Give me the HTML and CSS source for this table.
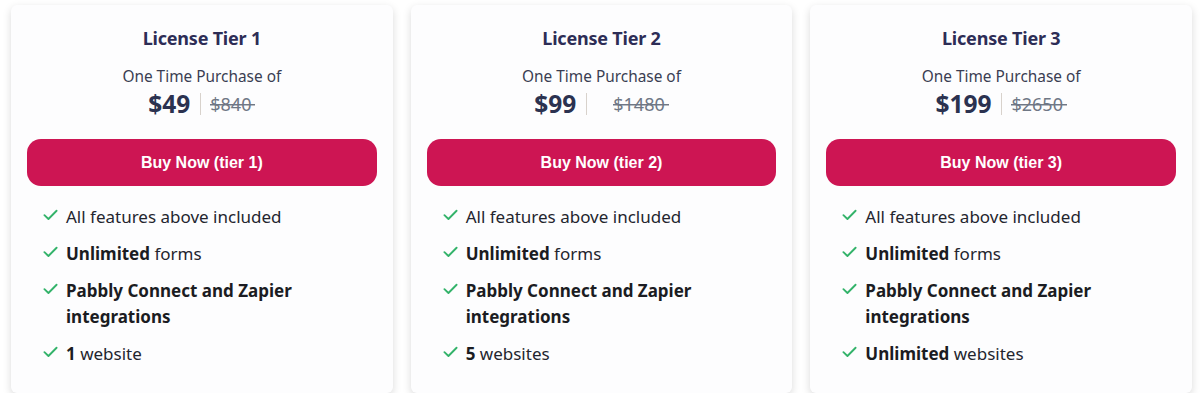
FILE: index.html
```html
<!DOCTYPE html>
<html>
<head>
<meta charset="utf-8">
<link rel="stylesheet" href="styles.css">
</head>
<body>
<div class="tiers">
  <div class="card">
    <h2 class="title">License Tier 1</h2>
    <p class="sub">One Time Purchase of</p>
    <div class="price-row">
      <span class="price">$49</span>
      <span class="sep"></span>
      <span class="old">$840</span>
    </div>
    <a class="buy">Buy Now (tier 1)</a>
    <ul class="features">
      <li><svg class="chk" viewBox="0 0 16 12"><path d="M1.5 6.2 L5.8 10.3 L14.5 1.5"/></svg><span>All features above included</span></li>
      <li><svg class="chk" viewBox="0 0 16 12"><path d="M1.5 6.2 L5.8 10.3 L14.5 1.5"/></svg><span><b>Unlimited</b> forms</span></li>
      <li><svg class="chk" viewBox="0 0 16 12"><path d="M1.5 6.2 L5.8 10.3 L14.5 1.5"/></svg><span><b>Pabbly Connect and Zapier integrations</b></span></li>
      <li><svg class="chk" viewBox="0 0 16 12"><path d="M1.5 6.2 L5.8 10.3 L14.5 1.5"/></svg><span><b>1</b> website</span></li>
    </ul>
  </div>
  <div class="card">
    <h2 class="title">License Tier 2</h2>
    <p class="sub">One Time Purchase of</p>
    <div class="price-row">
      <span class="price">$99</span>
      <span class="sep"></span>
      <span class="old wide">$1480</span>
    </div>
    <a class="buy">Buy Now (tier 2)</a>
    <ul class="features">
      <li><svg class="chk" viewBox="0 0 16 12"><path d="M1.5 6.2 L5.8 10.3 L14.5 1.5"/></svg><span>All features above included</span></li>
      <li><svg class="chk" viewBox="0 0 16 12"><path d="M1.5 6.2 L5.8 10.3 L14.5 1.5"/></svg><span><b>Unlimited</b> forms</span></li>
      <li><svg class="chk" viewBox="0 0 16 12"><path d="M1.5 6.2 L5.8 10.3 L14.5 1.5"/></svg><span><b>Pabbly Connect and Zapier integrations</b></span></li>
      <li><svg class="chk" viewBox="0 0 16 12"><path d="M1.5 6.2 L5.8 10.3 L14.5 1.5"/></svg><span><b>5</b> websites</span></li>
    </ul>
  </div>
  <div class="card">
    <h2 class="title">License Tier 3</h2>
    <p class="sub">One Time Purchase of</p>
    <div class="price-row">
      <span class="price">$199</span>
      <span class="sep"></span>
      <span class="old">$2650</span>
    </div>
    <a class="buy">Buy Now (tier 3)</a>
    <ul class="features">
      <li><svg class="chk" viewBox="0 0 16 12"><path d="M1.5 6.2 L5.8 10.3 L14.5 1.5"/></svg><span>All features above included</span></li>
      <li><svg class="chk" viewBox="0 0 16 12"><path d="M1.5 6.2 L5.8 10.3 L14.5 1.5"/></svg><span><b>Unlimited</b> forms</span></li>
      <li><svg class="chk" viewBox="0 0 16 12"><path d="M1.5 6.2 L5.8 10.3 L14.5 1.5"/></svg><span><b>Pabbly Connect and Zapier integrations</b></span></li>
      <li><svg class="chk" viewBox="0 0 16 12"><path d="M1.5 6.2 L5.8 10.3 L14.5 1.5"/></svg><span><b>Unlimited</b> websites</span></li>
    </ul>
  </div>
</div>
</body>
</html>
```

FILE: styles.css
```css
html, body {
  margin: 0;
  padding: 0;
  background: #ffffff;
}
body {
  font-family: "Noto Sans", "Open Sans", sans-serif;
  color: #222230;
}
.tiers {
  display: flex;
  gap: 18px;
  padding: 5px 8px 0 11px;
}
.card {
  width: 382px;
  height: 388px;
  box-sizing: border-box;
  background: #fdfdfe;
  border-radius: 6px;
  box-shadow: 0 3px 9px rgba(0, 0, 0, 0.15);
  padding: 21px 16px 0 16px;
  display: flex;
  flex-direction: column;
  align-items: stretch;
}
.title {
  margin: 0;
  text-align: center;
  font-family: "Noto Sans", sans-serif;
  font-weight: 700;
  font-size: 18px;
  line-height: 24px;
  letter-spacing: -0.2px;
  color: #2d2d56;
}
.sub {
  margin: 16px 0 0 0;
  text-align: center;
  font-size: 15.4px;
  line-height: 22px;
  color: #3a3d52;
}
.price-row {
  margin-top: 1px;
  height: 30px;
  display: flex;
  justify-content: center;
  align-items: center;
}
.price {
  font-weight: 700;
  font-size: 24.5px;
  line-height: 30px;
  color: #2b3250;
}
.sep {
  width: 1px;
  height: 22px;
  background: #d8d2cc;
  margin: 0 9px 0 10px;
}
.old {
  font-size: 18px;
  line-height: 30px;
  color: #6f7785;
  background: linear-gradient(#6f7785, #6f7785) no-repeat 0 54% / 100% 1.5px;
  padding-right: 4px;
}
.old.wide {
  margin-left: 17px;
}
.buy {
  margin-top: 20px;
  height: 47px;
  border-radius: 14px;
  background: #cd1553;
  color: #ffffff;
  font-family: "Liberation Sans", Arial, sans-serif;
  font-weight: 700;
  font-size: 16px;
  display: flex;
  align-items: center;
  justify-content: center;
}
.features {
  list-style: none;
  margin: 18px 0 0 0;
  padding: 0 0 0 16px;
  display: flex;
  flex-direction: column;
  gap: 11px;
}
.features li {
  display: flex;
  align-items: flex-start;
  gap: 8px;
  font-size: 17px;
  line-height: 26px;
  color: #24252e;
}
.features li span {
  max-width: 280px;
}
.features b {
  font-weight: 700;
  color: #1b1c22;
}
.chk {
  width: 15px;
  height: 12px;
  margin-top: 5px;
  flex: none;
  fill: none;
  stroke: #33b36a;
  stroke-width: 2;
  stroke-linecap: round;
  stroke-linejoin: round;
}
```
